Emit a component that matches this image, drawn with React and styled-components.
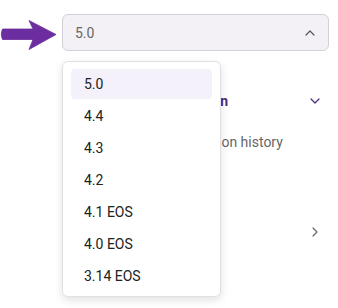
import React from "react";
import styled, { createGlobalStyle } from "styled-components";

const versions = ["5.0", "4.4", "4.3", "4.2", "4.1 EOS", "4.0 EOS", "3.14 EOS"];

function Chevron({ dir = "up", color = "#555" }) {
  const d = {
    up: "M4 10 L8 6 L12 10",
    down: "M4 6 L8 10 L12 6",
    right: "M6 4 L10 8 L6 12",
  }[dir];
  return (
    <svg width="16" height="16" viewBox="0 0 16 16" fill="none">
      <path d={d} stroke={color} strokeWidth="1.2" strokeLinecap="round" strokeLinejoin="round" />
    </svg>
  );
}

function Arrow() {
  return (
    <svg width="60" height="37" viewBox="0 0 60 37">
      <path
        d="M2.5 15 L33 15 L29 6.5 L56 20.5 L29 35.5 L33 25.5 L2.5 25.5 Q0 20.2 2.5 15 Z"
        fill="#6b2d9f"
        stroke="#6b2d9f"
        strokeWidth="0.8"
        strokeLinejoin="round"
      />
    </svg>
  );
}

export default function App() {
  return (
    <>
      <GlobalStyle />
      <Page>
        <TopRow>
          <ArrowSlot>
            <Arrow />
          </ArrowSlot>
          <SelectArea>
            <Select>
              <span>5.0</span>
              <Chevron dir="up" color="#555" />
            </Select>
            <Menu>
              {versions.map((v, i) => (
                <Item key={v} $active={i === 0}>
                  {v}
                </Item>
              ))}
            </Menu>
            <Behind>
              <SectionHead>
                <HeadText>Version</HeadText>
                <Chevron dir="down" color="#4a2a7a" />
              </SectionHead>
              <SubText>Version history</SubText>
              <LinkRow>
                <span>Docs</span>
                <Chevron dir="right" color="#666" />
              </LinkRow>
            </Behind>
          </SelectArea>
        </TopRow>
      </Page>
    </>
  );
}

const GlobalStyle = createGlobalStyle`
  body {
    margin: 0;
    background: #fff;
    font-family: Roboto, "Liberation Sans", sans-serif;
  }
`;

const Page = styled.div`
  width: 338px;
  height: 308px;
  overflow: hidden;
  padding-top: 14px;
  box-sizing: border-box;
`;

const TopRow = styled.div`
  display: flex;
  align-items: flex-start;
`;

const ArrowSlot = styled.div`
  width: 62px;
  display: flex;
`;

const SelectArea = styled.div`
  position: relative;
  width: 267px;
`;

const Select = styled.div`
  height: 37px;
  box-sizing: border-box;
  border: 1px solid #d3d0d8;
  border-radius: 6px;
  background: #f3f1f6;
  display: flex;
  align-items: center;
  justify-content: space-between;
  padding: 0 10px 0 12px;
  font-size: 14px;
  color: #666;
`;

const Menu = styled.div`
  position: absolute;
  left: 0;
  top: 47px;
  z-index: 2;
  width: 159px;
  box-sizing: border-box;
  background: #fff;
  border: 1px solid #e2e0e6;
  border-radius: 6px;
  box-shadow: 0 3px 8px rgba(0, 0, 0, 0.12);
  padding: 7px 8px 5px;
  display: flex;
  flex-direction: column;
  gap: 2px;
`;

const Item = styled.div`
  height: 30px;
  display: flex;
  align-items: center;
  padding-left: 13px;
  border-radius: 4px;
  font-size: 14px;
  color: #222;
  background: ${(p) => (p.$active ? "#f4f1fb" : "transparent")};
`;

const Behind = styled.div`
  padding: 36px 6px 0 118px;
  display: flex;
  flex-direction: column;
`;

const SectionHead = styled.div`
  display: flex;
  align-items: center;
  justify-content: space-between;
  height: 28px;
`;

const HeadText = styled.span`
  font-size: 14px;
  font-weight: 700;
  color: #4a2a7a;
`;

const SubText = styled.div`
  margin-top: 19px;
  padding-left: 10px;
  font-size: 14px;
  color: #666;
`;

const LinkRow = styled.div`
  margin-top: 74px;
  display: flex;
  align-items: center;
  justify-content: space-between;
  font-size: 14px;
  color: #333;
`;
